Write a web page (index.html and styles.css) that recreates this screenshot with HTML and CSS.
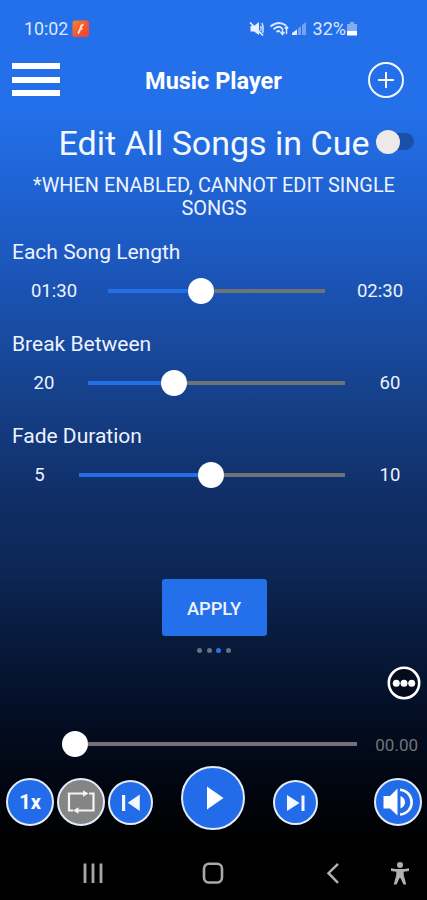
FILE: index.html
```html
<!DOCTYPE html>
<html lang="en">
<head>
<meta charset="utf-8">
<title>Music Player</title>
<link rel="stylesheet" href="styles.css">
</head>
<body>
<div class="screen">
  <div class="status">
    <span class="time">10:02</span>
    <svg class="app" width="18" height="18" viewBox="0 0 18 18"><defs><linearGradient id="o" x1="0" y1="0" x2="1" y2="1"><stop offset="0" stop-color="#f58a2a"/><stop offset=".5" stop-color="#f4582f"/><stop offset="1" stop-color="#ee4038"/></linearGradient></defs><rect x=".5" y=".5" width="16.5" height="16.5" rx="2.5" fill="url(#o)"/><path d="M11.500 4.500C8.500 5 9 7.500 8 9.500S7 12.500 6 13.500M8 8.800H10.500" fill="none" stroke="#ffe6dc" stroke-width="1.900"/></svg>
    <span class="spacer"></span>
    <svg class="tray" width="60" height="18" viewBox="0 0 60 18">
      <path d="M1.500 6H5L10 2V15L5 11.500H1.500Z" fill="#e8f0ff"/><path d="M1 2.500L14 15.500" stroke="#e8f0ff" stroke-width="1.700"/><path d="M11.500 6Q13 8.500 11.500 11M13 3Q15 8.500 13.500 13" fill="none" stroke="#c5d8fb" stroke-width="1.700"/>
      <g fill="none" stroke="#dbe7ff" stroke-width="1.900"><path d="M21.500 6.500Q29.500 0 37 5.500M24.500 9.200Q29.500 5 33 8.200M27.500 12Q29.500 10 31 12"/><path d="M33.500 8V14M31.500 12L33.500 14.500L35.500 12M37.500 14V6M35.800 8.500L37.500 6.500L39.200 8.500" stroke-width="1.500"/></g>
      <path d="M43 15V13L48 9.500V15Z" fill="#e8f0ff"/><path d="M49 15V8.500L52 6V15ZM53 15V5L57 2V15Z" fill="#76a2f0"/>
    </svg>
    <span class="pct">32%</span>
    <svg class="battery" width="12" height="16" viewBox="0 0 12 16"><path d="M4 1H8V3H11V10H1V3H4Z" fill="#85acf2"/><path d="M1 10H11V14.500H1Z" fill="#fff"/></svg>
  </div>
  <header class="header">
    <div class="menu"><i></i><i></i><i></i></div>
    <h1>Music Player</h1>
    <svg width="38" height="38" viewBox="0 0 38 38" fill="none" stroke="#f4f8ff" stroke-width="2"><circle cx="19" cy="19" r="17"/><path d="M19 11V27M11 19H27"/></svg>
  </header>
  <div class="edit"><h2>Edit All Songs in Cue</h2><div class="switch"><i></i></div></div>
  <p class="note">*WHEN ENABLED, CANNOT EDIT SINGLE<br>SONGS</p>
  <section class="setting length"><h3>Each Song Length</h3>
    <div class="row"><span>01:30</span><div class="track"><b class="fill"></b><i class="knob"></i><b class="rest"></b></div><span class="max">02:30</span></div></section>
  <section class="setting break"><h3>Break Between</h3>
    <div class="row"><span>20</span><div class="track"><b class="fill"></b><i class="knob"></i><b class="rest"></b></div><span class="max">60</span></div></section>
  <section class="setting fade"><h3>Fade Duration</h3>
    <div class="row"><span>5</span><div class="track"><b class="fill"></b><i class="knob"></i><b class="rest"></b></div><span class="max">10</span></div></section>
  <div class="action"><button class="apply">APPLY</button></div>
  <div class="pages"><i></i><i></i><i class="on"></i><i></i></div>
  <div class="more"><svg width="36" height="36" viewBox="0 0 36 36"><circle cx="18" cy="18" r="15.200" fill="#050b1c" stroke="#fff" stroke-width="2.600"/><g fill="#fff"><circle cx="10.300" cy="18.200" r="3.500"/><circle cx="18" cy="18.200" r="3.500"/><circle cx="25.700" cy="18.200" r="3.500"/></g></svg></div>
  <div class="progress"><i class="knob"></i><b class="rest"></b><span>00.00</span></div>
  <div class="controls">
    <div class="btn speed">1x</div>
    <div class="btn repeat"><svg width="48" height="48" viewBox="0 0 48 48"><g fill="none" stroke="#f4f4f4" stroke-width="2.200"><path d="M16 32.500H12V15.500H28M32 15.500H36.500V32.500H20"/></g><path d="M26 12.300L31.500 15.500L26 18.700ZM21.500 29.300L16 32.500L21.500 35.700Z" fill="#f4f4f4"/></svg></div>
    <div class="btn prev"><svg width="44" height="44" viewBox="0 0 44 44" fill="#f3f7ff"><path d="M13 14H16.200V30H13ZM30.800 13.500V30L18.800 21.800Z"/></svg></div>
    <div class="btn play"><svg width="64" height="64" viewBox="0 0 64 64" fill="#fff"><path d="M26 20.500V43.500L42.500 32Z"/></svg></div>
    <div class="btn next"><svg width="44" height="44" viewBox="0 0 44 44" fill="#f3f7ff"><path d="M13 14V30L25.500 22ZM27.500 14.500H30.500V30H27.500Z"/></svg></div>
    <div class="btn volume"><svg width="48" height="48" viewBox="0 0 48 48"><path d="M9.500 18H16L23.500 10.500V37.500L16 30.500H9.500Z" fill="#fff"/><path d="M26.500 18Q31 20 31 24.300T26.500 30.500Z" fill="#fff"/><path d="M26 11.800C41.500 13.500 41.500 35 26 36.500" fill="none" stroke="#fff" stroke-width="2.600"/></svg></div>
  </div>
  <nav class="nav">
    <svg width="24" height="24" viewBox="0 0 24 24" stroke="#a8a8a8" stroke-width="2.800"><path d="M4 2.500V22M12 2.500V22M20 2.500V22"/></svg>
    <svg width="24" height="24" viewBox="0 0 24 24" fill="none" stroke="#a8a8a8" stroke-width="2.600"><rect x="3" y="2.700" width="18" height="18.800" rx="5"/></svg>
    <svg width="24" height="24" viewBox="0 0 24 24" fill="none" stroke="#b0b0b0" stroke-width="2.500"><path d="M17 2.800L7.500 12.200L17 21.800"/></svg>
    <svg width="24" height="24" viewBox="0 0 24 24" fill="#b0b0b0"><circle cx="12" cy="4" r="3"/><path d="M3 7.200Q12 9 21 7.200V9.900L15.700 10.700V14L18.300 23.500H15.400L12.500 17H11.500L8.600 23.500H5.700L8.300 14V10.700L3 9.900Z"/></svg>
  </nav>
</div>
</body>
</html>
```
FILE: styles.css
```css
* { box-sizing: border-box; margin: 0; padding: 0; }
body { font-family: Roboto, sans-serif; color: #edf3ff; }
svg { display: block; }
.screen {
  width: 427px; height: 900px; overflow: hidden;
  display: flex; flex-direction: column;
  background: linear-gradient(#2370ea 0, #2370ea 110px, #1d5cc7 230px, #194ca3 330px, #143c81 420px, #102e66 500px, #0d2858 560px, #091d40 625px, #04102a 700px, #030c20 730px, #01050e 790px, #000 840px);
}
.screen > * { flex: none; }
.status { height: 56px; padding: 1px 69px 0 24px; display: flex; align-items: center; font-size: 18px; color: #dce8ff; }
.time { font-size: 17.800px; }
.app { margin-left: 4px; }
.spacer { flex: 1; }
.pct { margin-left: 4px; }
.header { height: 48px; padding: 0 22px 0 12px; display: flex; align-items: center; justify-content: space-between; }
.menu { width: 48px; display: grid; gap: 7.500px; margin-top: -1px; }
.menu i { height: 6px; background: #fff; }
h1 { font-size: 23.500px; font-weight: 700; color: #fff; margin: 2px 8px 0; }
.edit { height: 69px; display: flex; align-items: center; padding: 8px 13px 0 58.500px; justify-content: space-between; }
h2 { font-size: 34px; font-weight: 400; white-space: nowrap; color: #f4f8ff; }
.switch { width: 38px; height: 24px; display: flex; align-items: center; margin-top: -2px; }
.switch::after { content: ""; width: 26px; height: 17px; margin-left: -12px; border-radius: 9px; background: #1b50aa; }
.switch i { flex: none; width: 24px; height: 24px; border-radius: 50%; background: #ece9e8; position: relative; z-index: 1; }
.note { height: 65px; padding: 1px 0 0 1px; text-align: center; font-size: 19.900px; line-height: 23px; }
.setting { height: 92px; }
h3 { font-size: 21px; line-height: 28px; font-weight: 400; padding-left: 12px; }
.row { display: grid; height: 28px; margin-top: 11px; align-items: center; font-size: 18.500px; text-align: center; }
.row span { margin-top: -1px; }
.length .row { grid-template-columns: 108px 217px 102px; }
.break .row { grid-template-columns: 88px 257px 82px; }
.fade .row { grid-template-columns: 79px 266px 82px; }
.max { padding-left: 8px; }
.track { display: flex; align-items: center; }
.fill { height: 4px; background: #246eea; }
.length .fill { width: 80px; }
.break .fill { width: 73px; }
.fade .fill { width: 119px; }
.knob { width: 26px; height: 26px; border-radius: 50%; background: #fff; }
.rest { flex: 1; height: 4px; background: #6e7375; }
.action { height: 122px; padding: 65px 0 0 1px; display: flex; justify-content: center; }
.apply { width: 105px; height: 57px; border: 0; border-radius: 3px; background: #2470eb; color: #edf3ff; font: 500 18.300px Roboto, sans-serif; padding-top: 2px; }
.pages { height: 28px; display: flex; justify-content: center; gap: 4.500px; padding: 11.500px 0 0 1px; }
.pages i { width: 5px; height: 5px; border-radius: 50%; background: #69717d; }
.pages .on { background: #2d72e0; }
.more { height: 60px; padding: 1px 5px 0 0; display: flex; justify-content: flex-end; }
.progress { height: 40px; padding: 0 9px 0 62px; display: flex; align-items: center; }
.progress .rest { flex: none; width: 269px; background: #737377; height: 4px; }
.progress span { margin: 2px 0 0 auto; color: #747478; font-size: 17px; }
.controls { height: 85px; display: flex; align-items: flex-start; padding: 2px 5px 0 6px; }
.btn { display: flex; align-items: center; justify-content: center; border: 2px solid #e2ebf7; border-radius: 50%; background: #236ce9; overflow: hidden; color: #fff; }
.btn svg { flex: none; }
.speed, .repeat, .volume { width: 48px; height: 48px; margin-top: 12px; }
.speed { font-size: 20px; font-weight: 700; }
.repeat { background: #858585; margin-left: 3px; }
.prev, .next { width: 45px; height: 45px; margin-top: 14px; }
.prev { margin-left: 3px; }
.play { width: 64px; height: 64px; margin-left: 28px; }
.next { margin-left: 28px; }
.volume { margin-left: auto; }
.nav { height: 48px; display: flex; padding: 0 15px 0 81px; align-items: center; }
.nav svg:nth-child(2), .nav svg:nth-child(3) { margin-left: 96px; }
.nav svg:nth-child(4) { margin-left: auto; }
```
